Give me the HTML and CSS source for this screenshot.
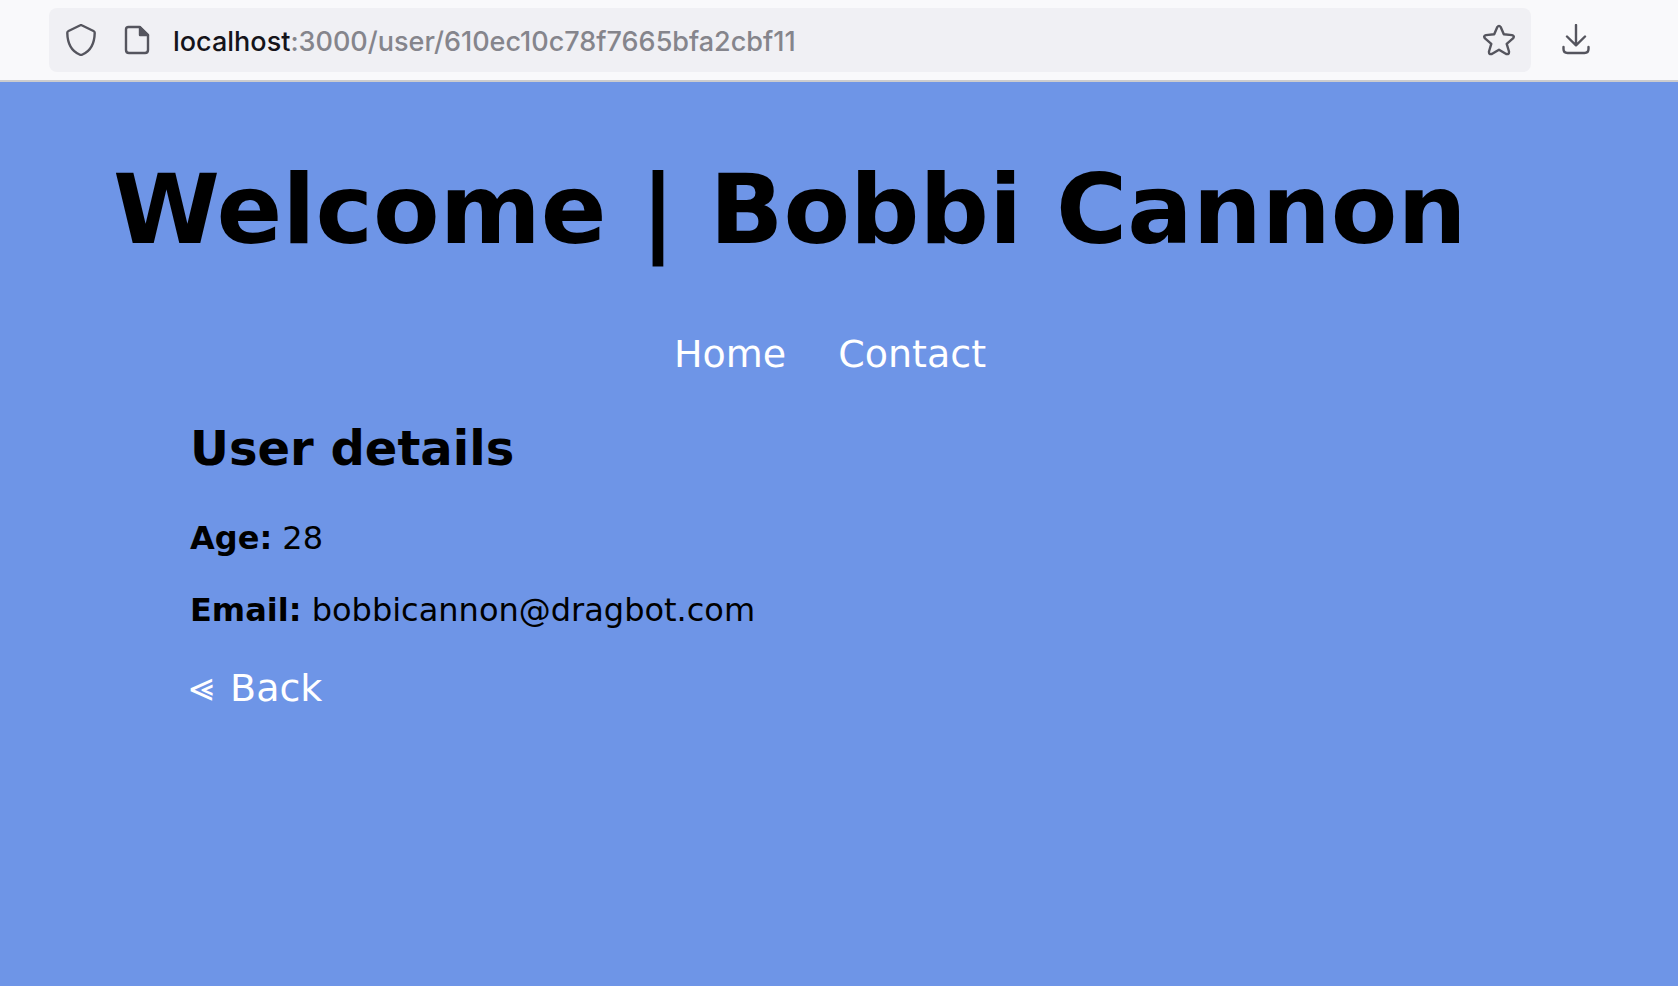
FILE: index.html
```html
<!DOCTYPE html>
<html lang="en">
<head>
<meta charset="utf-8">
<title>Welcome | Bobbi Cannon</title>
<link rel="stylesheet" href="styles.css">
</head>
<body>
<div class="toolbar">
  <div class="address-bar">
    <svg class="icon shield" viewBox="0 0 32 32" aria-hidden="true"><path d="M14.800 1.500 Q16 0.800 17.200 1.500 L28.500 7 Q29.800 7.600 29.700 9 C29.500 19 25.500 27 17.500 30.500 Q16 31.300 14.500 30.500 C6.500 27 2.500 19 2.300 9 Q2.200 7.600 3.500 7 Z"/></svg>
    <svg class="icon file" viewBox="0 0 32 32" aria-hidden="true"><path d="M7.500 3 H18.500 L27 11 V26 Q27 29 24 29 H8 Q5 29 5 26 V5.500 Q5 3 7.500 3 Z"/><path class="fold" d="M19 3 V11 H27 Z"/></svg>
    <span class="url"><span class="host">localhost</span>:3000/user/610ec10c78f7665bfa2cbf11</span>
    <button class="tool star" aria-label="Bookmark this page"><svg class="icon" viewBox="0 0 32 32"><path d="M14.200 3.200 Q16 0.600 17.800 3.200 L20.800 10.300 L29 11.100 Q32 12 30 14.400 L23.700 19.800 L26 27.500 Q26.200 30.800 23.200 30 L16 25.700 L8.800 30 Q5.800 30.800 6 27.500 L8.300 19.800 L2 14.400 Q0 12 3 11.100 L11.200 10.300 Z"/></svg></button>
  </div>
  <button class="tool" aria-label="Downloads"><svg class="icon" viewBox="0 0 32 32"><path d="M16 1 V20.500 M7 12.500 L16 21.300 L25 12.500 M3.500 23 V25 Q3.500 29 7.500 29 H24.500 Q28.500 29 28.500 25 V23"/></svg></button>
</div>
<main class="page">
  <h1 class="title">Welcome | Bobbi Cannon</h1>
  <nav class="menu"><a class="link" href="#">Home</a><a class="link" href="#">Contact</a></nav>
  <section class="details">
    <h2 class="subtitle">User details</h2>
    <p class="detail"><strong>Age:</strong> 28</p>
    <p class="detail"><strong>Email:</strong> bobbicannon@dragbot.com</p>
    <p class="back"><a class="link" href="#"><span class="arrow">⪡</span> Back</a></p>
  </section>
</main>
</body>
</html>
```
FILE: styles.css
```css
* { box-sizing: border-box; }
body { margin: 0; min-height: 100vh; display: flex; flex-direction: column; background: #6e95e7; color: #000; font-family: Verdana, "DejaVu Sans", sans-serif; }
.toolbar { display: flex; align-items: center; gap: 29px; padding: 8px 86px 8px 49px; background: #f9f9fb; border-bottom: 2px solid #ccccce; }
.address-bar { flex: 1; display: flex; align-items: center; height: 64px; padding: 0 16px; border-radius: 8px; background: #f0f0f4; }
.icon { display: block; width: 32px; height: 32px; fill: none; stroke: #55555e; stroke-width: 2.4; stroke-linecap: round; stroke-linejoin: round; }
.file { margin-left: 24px; }
.fold { fill: #55555e; }
.url { margin-left: 20px; padding-top: 3px; color: #85858c; font: 500 27px/40px Inter, sans-serif; }
.host { color: #15141a; }
.tool { padding: 0; border: 0; background: none; }
.star { margin-left: auto; }
.page { padding: 62px 131px 60px 113px; }
.title { margin: 0; font-size: 97px; line-height: 132px; }
.menu { display: flex; justify-content: center; gap: 52px; margin-top: 54px; }
.link { color: #fff; font-size: 38px; line-height: 48px; text-decoration: none; }
.arrow { margin-right: 4px; font-size: 42px; line-height: 1; }
.details { padding: 40px 77px; }
.subtitle { margin: 0 0 40px; font-size: 48px; line-height: 60px; }
.detail { margin: 0 0 32px; font-size: 32px; line-height: 40px; }
.back { margin: 34px 0 0; }
```
